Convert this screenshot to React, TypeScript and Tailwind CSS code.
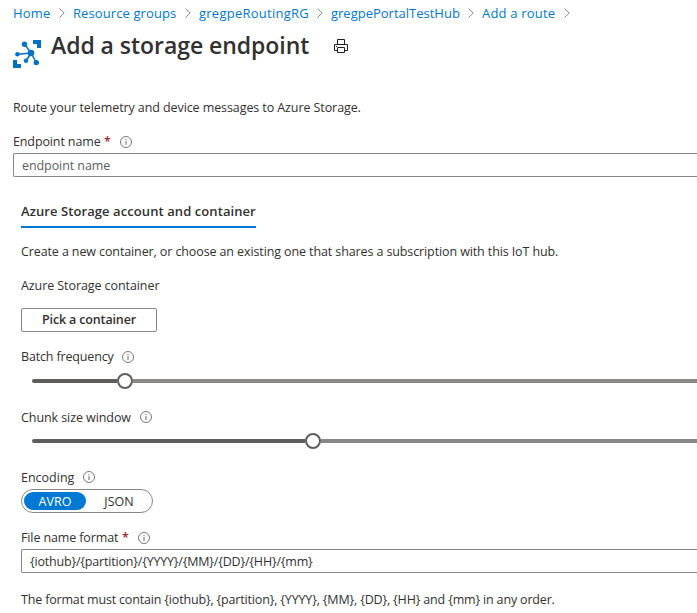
import React from "react";

function InfoIcon() {
  return (
    <svg width="12" height="12" viewBox="0 0 12 12" fill="none" className="shrink-0">
      <circle cx="6" cy="6" r="5.5" stroke="#6b6967" strokeWidth="0.9" />
      <path d="M6 5v4M6 3v1.1" stroke="#6b6967" strokeWidth="1" />
    </svg>
  );
}

function Chevron() {
  return (
    <svg width="6" height="10" viewBox="0 0 6 10" fill="none" className="shrink-0">
      <path d="M0.5 0.5L5.2 5L0.5 9.5" stroke="#8a8886" strokeWidth="1" />
    </svg>
  );
}

function HubIcon() {
  return (
    <svg width="28" height="28" viewBox="0 0 28 28" className="mt-[14px] shrink-0">
      <path d="M20 0h8v8h-4V4h-4zM0 20h4v4h4v4H0z" fill="#0072c6" />
      <path d="M11.5 4L18 13L4.500 14.200M18 13L13 21M18 13L23.300 22.500" stroke="#0072c6" strokeWidth="1.500" fill="none" />
      <circle cx="11.500" cy="4.200" r="2.700" fill="#0072c6" />
      <circle cx="18" cy="13" r="3.300" fill="#0072c6" />
      <circle cx="4.400" cy="14.200" r="2.200" fill="#0072c6" />
      <circle cx="13" cy="20.800" r="2.200" fill="#0072c6" />
      <circle cx="23.300" cy="22.600" r="2.700" fill="#0072c6" />
    </svg>
  );
}

function PrintIcon() {
  return (
    <svg width="14" height="14" viewBox="0 0 14 14" fill="none" stroke="#201f1e" className="mt-[13px] ml-[25px] shrink-0">
      <path d="M3.500 5.500v-5h7v5M3.500 11.500h-3v-6h13v6h-3M3.500 8.500h7v5h-7z" />
      <path d="M2 7.500h1" />
    </svg>
  );
}

type LabelProps = { text: string; style: string; required?: boolean };

function Label({ text, style, required }: LabelProps) {
  return (
    <div className="flex h-4 items-center">
      <span className={style}>{text}</span>
      {required && <span className="mr-[10px] -ml-1 w-[6px] font-semibold text-[#a4262c]">*</span>}
      <InfoIcon />
    </div>
  );
}

function Slider({ filled }: { filled: string }) {
  return (
    <div className="ml-[11px] flex h-4 items-center">
      <div className={`h-1 rounded-l-full bg-[#605e5c] ${filled}`} />
      <div className="size-4 shrink-0 rounded-full border-2 border-[#605e5c] bg-white" />
      <div className="h-1 grow bg-[#8a8886]" />
    </div>
  );
}

const crumbs = [
  { text: "Home", style: "w-[46px] tracking-[0.15px]" },
  { text: "Resource groups", style: "w-[112px] tracking-[0.1px]" },
  { text: "gregpeRoutingRG", style: "w-[118px] tracking-[0.25px]" },
  { text: "gregpePortalTestHub", style: "w-[137px]" },
  { text: "Add a route", style: "w-[82px] tracking-[0.2px]" },
];

export default function App() {
  return (
    <main className="h-[613px] w-[697px] overflow-hidden bg-white font-['Open_Sans','Noto_Sans',sans-serif] text-[12.5px] leading-4 whitespace-nowrap text-[#323130]">
      <nav className="flex h-[26px] items-center pl-[13px] text-[13px] text-[#0078d4]">
        {crumbs.map((c) => (
          <React.Fragment key={c.text}>
            <a className={c.style}>{c.text}</a>
            <span className="mr-2 flex"><Chevron /></span>
          </React.Fragment>
        ))}
      </nav>
      <header className="flex h-[73px] pl-[13px]">
        <HubIcon />
        <h1 className="ml-[10px] w-[258px] pt-[3px] text-[23px] leading-8 font-semibold tracking-[-0.05px]">Add a storage endpoint</h1>
        <PrintIcon />
      </header>
      <section className="pl-[13px]">
        <p className="pt-px tracking-[-0.09px]">Route your telemetry and device messages to Azure Storage.</p>
        <div className="mt-[18px]">
          <Label text="Endpoint name" style="w-[95px] tracking-[-0.12px]" required />
        </div>
        <div className="mt-[3px] flex h-6 items-center rounded-l-xs border border-r-0 border-[#8a8886] pt-0.5 pl-2 tracking-[-0.08px] text-[#605e5c]">
          endpoint name
        </div>
      </section>
      <section className="pl-[21px]">
        <div className="mt-[26px] h-[25px] w-[235px] border-b-2 border-[#0078d4] text-[13px] font-semibold tracking-[0.08px]">
          Azure Storage account and container
        </div>
        <p className="mt-[15px] pt-px tracking-[-0.11px]">
          Create a new container, or choose an existing one that shares a subscription with this IoT hub.
        </p>
        <p className="mt-[17px] pt-px tracking-[-0.08px]">Azure Storage container</p>
        <button className="mt-[14px] flex h-6 w-[136px] items-center justify-center rounded-xs border border-[#8a8886] font-semibold tracking-[-0.15px]">
          Pick a container
        </button>
        <div className="mt-[17px]">
          <Label text="Batch frequency" style="w-[101px] tracking-[-0.15px]" />
        </div>
        <div className="mt-2"><Slider filled="w-[85px]" /></div>
        <div className="mt-5">
          <Label text="Chunk size window" style="w-[119px] pt-0.5 tracking-[-0.08px]" />
        </div>
        <div className="mt-2"><Slider filled="w-[273px]" /></div>
        <div className="mt-5">
          <Label text="Encoding" style="w-[62px] pt-0.5" />
        </div>
        <div className="mt-1 flex h-6 w-[132px] items-center rounded-full border border-[#8a8886] pl-[2px]">
          <span className="flex h-[18px] w-[62px] items-center justify-center rounded-full bg-[#0078d4] pt-0.5 text-white">AVRO</span>
          <span className="w-[66px] pt-0.5 text-center">JSON</span>
        </div>
        <div className="mt-[17px]">
          <Label text="File name format" style="w-[105px] tracking-[-0.12px]" required />
        </div>
        <div className="mt-[3px] flex h-6 items-center rounded-l-xs border border-r-0 border-[#8a8886] pt-0.5 pl-2 tracking-[-0.19px]">
          {"{iothub}/{partition}/{YYYY}/{MM}/{DD}/{HH}/{mm}"}
        </div>
        <p className="mt-[18px] pt-px tracking-[-0.17px]">
          {"The format must contain {iothub}, {partition}, {YYYY}, {MM}, {DD}, {HH} and {mm} in any order."}
        </p>
      </section>
    </main>
  );
}
